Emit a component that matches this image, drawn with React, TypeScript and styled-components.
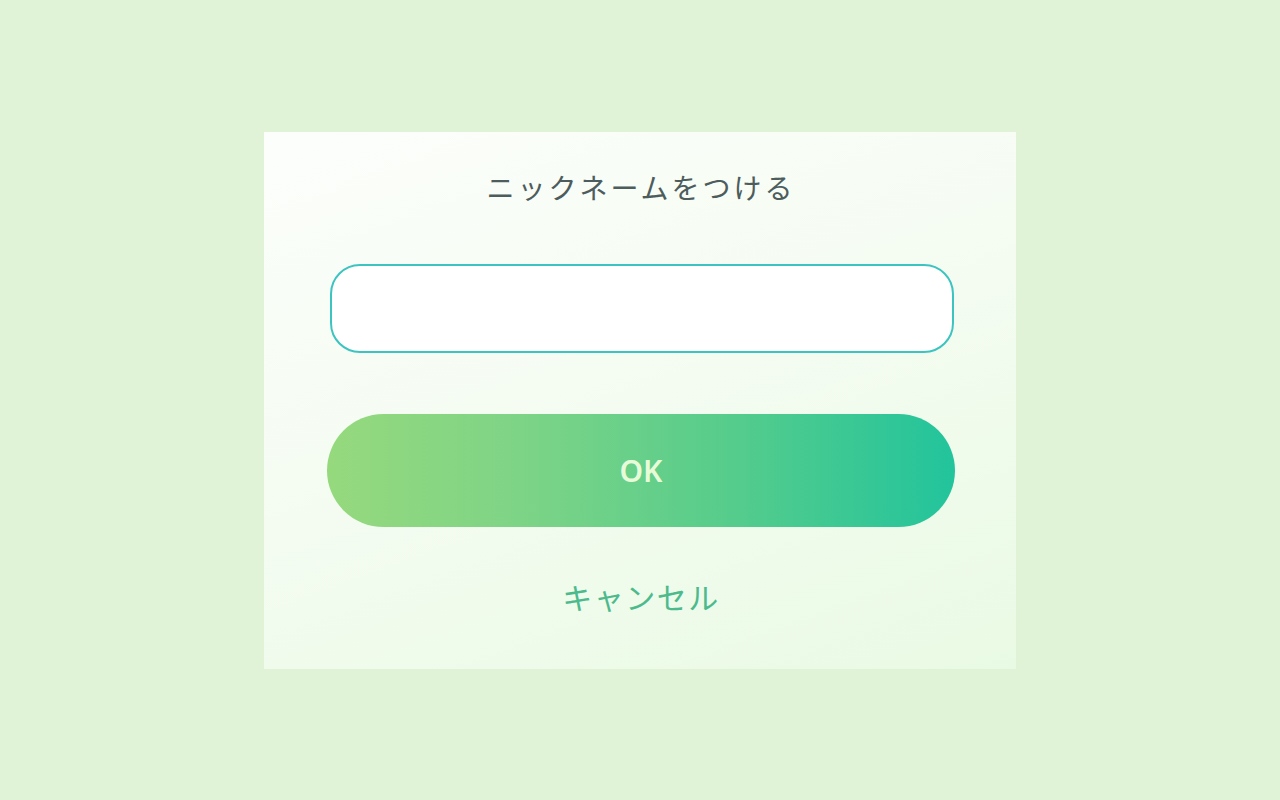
import styled, { createGlobalStyle } from "styled-components";

const GlobalStyle = createGlobalStyle`
  html, body {
    margin: 0;
    padding: 0;
    background: #e0f3d6;
  }
  body {
    font-family: "Noto Sans CJK JP", "Noto Sans", sans-serif;
  }
`;

const Page = styled.div`
  width: 1280px;
  height: 800px;
  display: flex;
  align-items: center;
  justify-content: center;
`;

const Dialog = styled.div`
  width: 752px;
  height: 537px;
  box-sizing: border-box;
  padding: 35px 61px 0 63px;
  display: flex;
  flex-direction: column;
  align-items: center;
  background: linear-gradient(160deg, #fcfefb 0%, #f5fcf2 45%, #e9fae4 100%);
`;

const Title = styled.h2`
  margin: 0;
  font-size: 28px;
  font-weight: 400;
  line-height: 40px;
  letter-spacing: 3px;
  color: #4d5c5c;
`;

const NameInput = styled.input`
  margin-top: 57px;
  width: 624px;
  height: 89px;
  box-sizing: border-box;
  border: 2px solid #3cc4c0;
  border-radius: 30px;
  background: #ffffff;
  outline: none;
  padding: 0 28px;
  font-size: 28px;
  font-family: inherit;
  align-self: flex-end;
  margin-right: 1px;
`;

const OkButton = styled.button`
  margin-top: 61px;
  width: 628px;
  height: 113px;
  border: none;
  border-radius: 57px;
  background: linear-gradient(90deg, #96d97d 0%, #7ed486 30%, #55cc8c 65%, #22c49c 100%);
  color: #e8fbd9;
  font-family: "Noto Sans", "Liberation Sans", sans-serif;
  font-size: 30px;
  font-weight: 600;
  cursor: pointer;
`;

const CancelLink = styled.button`
  margin-top: 48px;
  border: none;
  background: none;
  padding: 0;
  color: #4cba8c;
  font-family: inherit;
  font-size: 30px;
  font-weight: 400;
  letter-spacing: 1.5px;
  line-height: 42px;
  cursor: pointer;
`;

export default function App() {
  return (
    <>
      <GlobalStyle />
      <Page>
        <Dialog>
          <Title>ニックネームをつける</Title>
          <NameInput type="text" />
          <OkButton>OK</OkButton>
          <CancelLink>キャンセル</CancelLink>
        </Dialog>
      </Page>
    </>
  );
}
